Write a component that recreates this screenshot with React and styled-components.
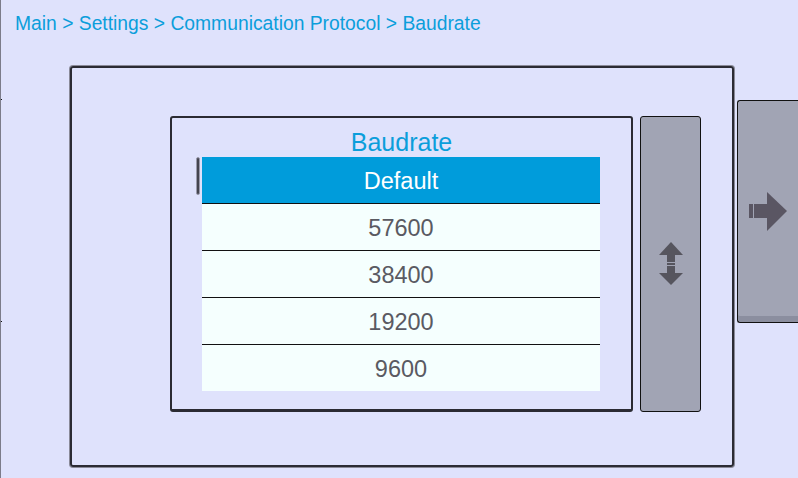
import React from "react";
import styled, { createGlobalStyle, css } from "styled-components";

const GlobalStyle = createGlobalStyle`
  html, body {
    margin: 0;
    padding: 0;
  }
  body {
    background: #dfe2fc;
    font-family: "Liberation Sans", Arial, sans-serif;
    overflow: hidden;
  }
`;

const Screen = styled.div`
  width: 798px;
  height: 478px;
  box-sizing: border-box;
  border-left: 1px solid #7c7c8a;
  display: flex;
  flex-direction: column;
  overflow: hidden;
`;

const Breadcrumb = styled.div`
  height: 44px;
  box-sizing: border-box;
  padding: 13px 0 0 14px;
  font-size: 19.3px;
  color: #0b9edb;
  white-space: nowrap;
`;

const Body = styled.div`
  display: flex;
  align-items: flex-start;
`;

const PrevEdge = styled.div`
  width: 1px;
  height: 221px;
  flex-shrink: 0;
  margin-top: 55px;
  border-top: 1px solid #111;
  border-bottom: 1px solid #111;
`;

const OuterPanel = styled.div`
  width: 664px;
  height: 401px;
  flex-shrink: 0;
  box-sizing: border-box;
  margin: 22px 0 0 68px;
  padding: 48px 0 0 98px;
  border: 2px solid #2b2b34;
  border-radius: 3px;
  box-shadow: 0 0 0 1px #8a8a98;
  display: flex;
  gap: 7px;
`;

const InnerPanel = styled.div`
  width: 463px;
  height: 296px;
  flex-shrink: 0;
  box-sizing: border-box;
  border: 2px solid #2b2b33;
  border-bottom-width: 3px;
  border-radius: 3px;
  display: flex;
  flex-direction: column;
`;

const Title = styled.div`
  height: 39px;
  box-sizing: border-box;
  padding-top: 11px;
  line-height: 27px;
  font-size: 25px;
  text-align: center;
  color: #0b9edb;
`;

const ListArea = styled.div`
  display: flex;
  align-items: flex-start;
  gap: 2px;
  padding-left: 24px;
`;

const ScrollThumb = styled.div`
  width: 2px;
  height: 36px;
  background: #44444f;
  border: 1px solid #9a9aab;
  border-radius: 2px;
`;

const List = styled.div`
  width: 398px;
  display: flex;
  flex-direction: column;
`;

const Row = styled.div`
  height: 46px;
  box-sizing: border-box;
  padding-top: 3px;
  line-height: 43px;
  font-size: 23.5px;
  text-align: center;
  background: #f5fffe;
  color: #5a5a62;
  & + & {
    height: 47px;
    border-top: 1px solid #111;
  }
  ${(props) =>
    props.selected &&
    css`
      background: #009cdb;
      color: #ffffff;
    `}
`;

const SideButton = styled.div`
  height: 296px;
  width: 61px;
  flex-shrink: 0;
  box-sizing: border-box;
  background: #a1a4b4;
  border: 1px solid #111;
  border-radius: 3px;
  display: flex;
  align-items: center;
  justify-content: center;
`;

const NextButton = styled.div`
  width: 70px;
  height: 223px;
  flex-shrink: 0;
  box-sizing: border-box;
  margin: 56px 0 0 3px;
  padding-left: 11px;
  background: #a1a4b4;
  border: 1px solid #111;
  border-right: none;
  border-radius: 3px 0 0 3px;
  box-shadow: inset 0 -6px 0 #8b8e9f;
  display: flex;
  align-items: center;
`;

function UpDownIcon() {
  return (
    <svg width="24" height="44" viewBox="0 0 24 44">
      <g fill="#56555e">
        <polygon points="0,13 12,0 24,13" />
        <rect x="8" y="12" width="8" height="8" />
        <rect x="8" y="21" width="8" height="2" />
        <rect x="8" y="24" width="8" height="8" />
        <polygon points="0,31 12,43 24,31" />
      </g>
    </svg>
  );
}

function RightArrowIcon() {
  return (
    <svg width="38" height="40" viewBox="0 0 38 40">
      <g fill="#5a5663">
        <rect x="0" y="12" width="4" height="14" />
        <rect x="5" y="12" width="14" height="14" />
        <polygon points="18,0 38,19 18,39" />
      </g>
    </svg>
  );
}

const rates = ["Default", "57600", "38400", "19200", "9600"];

export default function App() {
  return (
    <Screen>
      <GlobalStyle />
      <Breadcrumb>Main &gt; Settings &gt; Communication Protocol &gt; Baudrate</Breadcrumb>
      <Body>
        <PrevEdge />
        <OuterPanel>
          <InnerPanel>
            <Title>Baudrate</Title>
            <ListArea>
              <ScrollThumb />
              <List>
                {rates.map((r, i) => (
                  <Row key={r} selected={i === 0}>
                    {r}
                  </Row>
                ))}
              </List>
            </ListArea>
          </InnerPanel>
          <SideButton>
            <UpDownIcon />
          </SideButton>
        </OuterPanel>
        <NextButton>
          <RightArrowIcon />
        </NextButton>
      </Body>
    </Screen>
  );
}
